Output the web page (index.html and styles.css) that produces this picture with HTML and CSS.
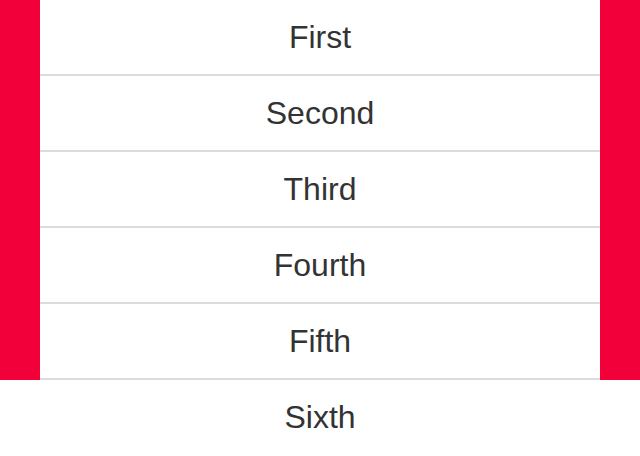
FILE: index.html
```html
<!DOCTYPE html>
<html lang="en">
<head>
  <meta charset="UTF-8">
  <meta name="viewport" content="width=device-width, initial-scale=1.0">
  <title>List</title>
  <link rel="stylesheet" href="styles.css">
</head>
<body>

  <div class="list-container">
    <!-- Red backdrop only covers the first 380px, the last item hangs below it -->
    <ul class="item-list">
      <li>First</li>
      <li>Second</li>
      <li>Third</li>
      <li>Fourth</li>
      <li>Fifth</li>
      <li>Sixth</li>
    </ul>
  </div>

</body>
</html>
```

FILE: styles.css
```css
body {
  margin: 0;
  font-family: 'Liberation Sans', Arial, sans-serif;
  background-color: #fff;
}

.list-container {
  background: linear-gradient(#f2003a, #f2003a) top left / 100% 380px no-repeat;
  padding: 0 40px;
}

.item-list {
  list-style: none;
  margin: 0;
  padding: 0;
  background-color: #fff;
}

.item-list li {
  height: 74px;
  line-height: 74px;
  border-bottom: 2px solid #dcdcdc;
  text-align: center;
  font-size: 32px;
  color: #333;
}

.item-list li:last-child {
  border-bottom: none;
}
```
